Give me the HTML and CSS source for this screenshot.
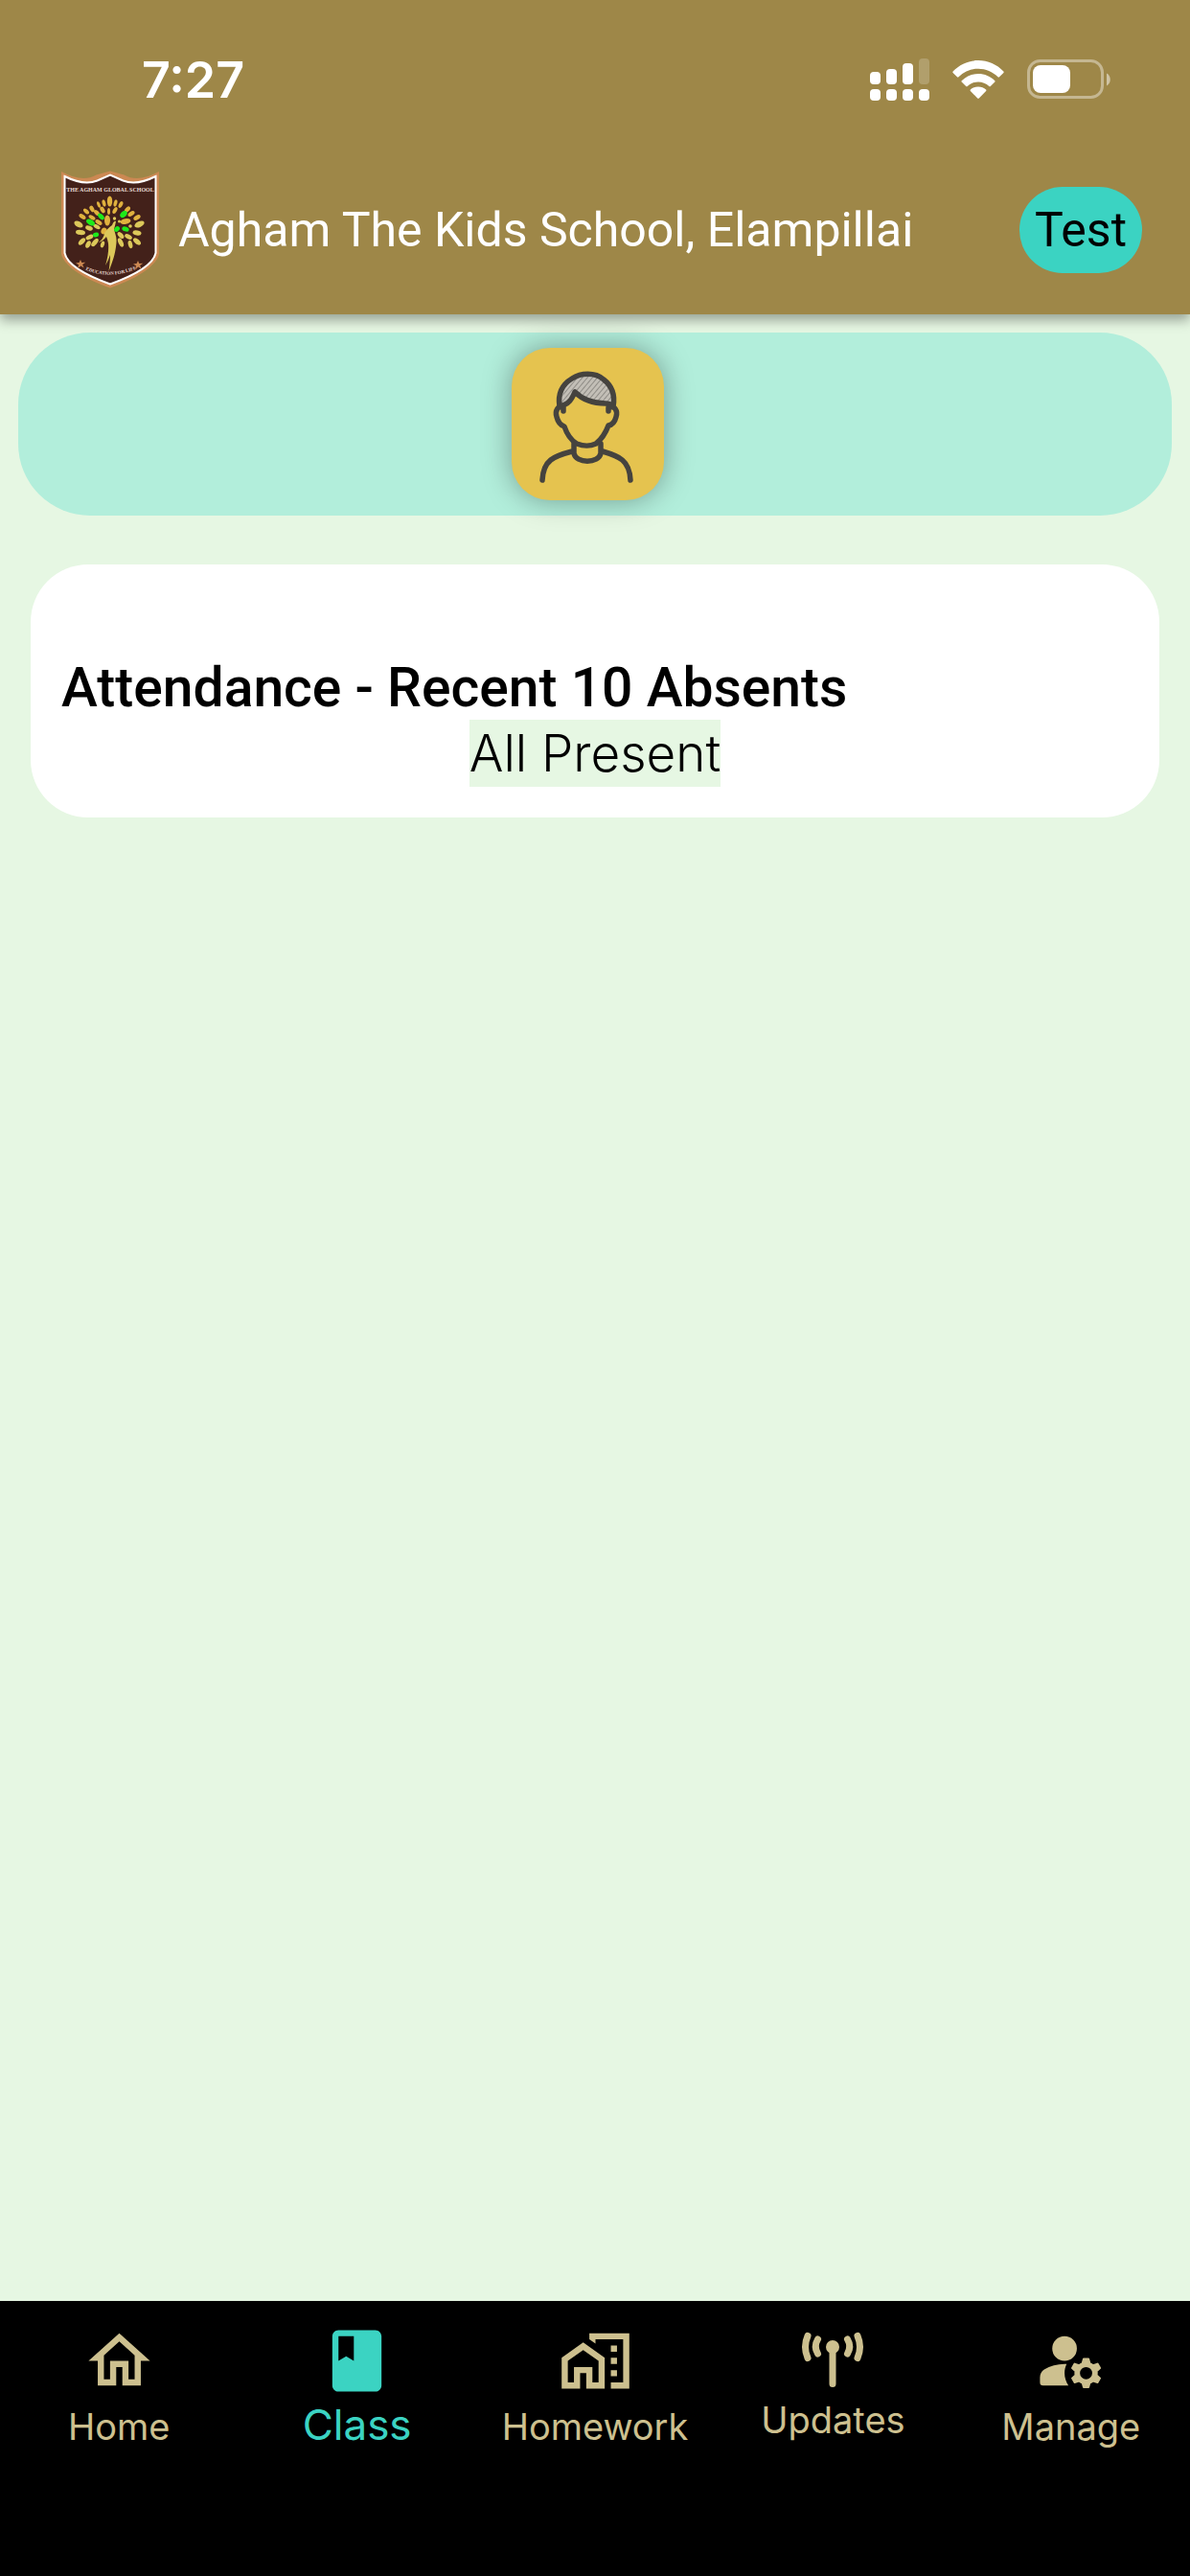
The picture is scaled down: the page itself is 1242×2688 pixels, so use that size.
FILE: index.html
```html
<!DOCTYPE html>
<html lang="en">
<head>
  <meta charset="UTF-8">
  <meta name="viewport" content="width=device-width, initial-scale=1.0">
  <title>Agham The Kids School, Elampillai</title>
  <link rel="stylesheet" href="styles.css">
</head>
<body>
  <header class="header">
    <div class="status">
      <span class="time">7:27</span>
      <svg class="signal" viewBox="0 0 62 44" fill="#fff">
        <rect x="0" y="14" width="11" height="13" rx="4"/>
        <rect x="17" y="11" width="11" height="16" rx="4"/>
        <rect x="34" y="5" width="11" height="22" rx="4"/>
        <rect x="51" y="0" width="11" height="27" rx="4" opacity=".2"/>
        <rect x="0" y="32" width="11" height="12" rx="4"/>
        <rect x="17" y="32" width="11" height="12" rx="4"/>
        <rect x="34" y="32" width="11" height="12" rx="4"/>
        <rect x="51" y="32" width="11" height="12" rx="4"/>
      </svg>
      <svg class="wifi" viewBox="0 0 54 40" fill="#fff">
        <path d="M0.600 11.500C7.500 4.200 17 0 27 0s19.500 4.200 26.400 11.500q.6.800 0 1.500L49 17.300q-.8.700-1.500 0C42 11.700 34.800 8.700 27 8.700S12 11.700 6.500 17.300q-.7.700-1.500 0L.6 13q-.6-.7 0-1.500z"/>
        <path d="M9.700 21.200C14.200 16.700 20.300 14 27 14s12.800 2.700 17.300 7.200q.6.700 0 1.400l-4.500 4.400q-.7.700-1.500 0C35.200 24 31.200 22.400 27 22.400S18.800 24 15.700 27q-.8.700-1.500 0l-4.500-4.400q-.6-.7 0-1.400z"/>
        <path d="M18.900 30.500C21 28.700 23.900 27.500 27 27.500s6 1.200 8.100 3q.7.700 0 1.400l-7.300 7.500q-.8.800-1.600 0l-7.300-7.500q-.7-.7 0-1.400z"/>
      </svg>
      <svg class="battery" viewBox="0 0 88 42">
        <rect x="1.500" y="1.500" width="77" height="38" rx="12" fill="none" stroke="#fff" stroke-opacity=".4" stroke-width="3"/>
        <path d="M83 14.500c5 2.300 5 10.700 0 13z" fill="#fff" opacity=".5"/>
        <rect x="6" y="6" width="39" height="29" rx="8" fill="#fff"/>
      </svg>
    </div>

    <div class="bar">
      <svg class="logo" viewBox="0 0 130 140">
        <path d="M14 9q22 12 36.500 3.500L65 8.500l14.500 4Q94 21 116 9v86c-2 10-18 24-51 35.500C32 119 16 105 14 95z" fill="#cb8852"/>
        <path d="M17.500 14q20 10 34 4.500L65 12.500l13.500 6q14 5.500 34-4.500v80c-2 10-16 21-47.500 32.500C33.500 115 19.500 104 17.500 94z" fill="#43211a" stroke="#fff" stroke-width="2"/>
        <text x="65" y="29.500" class="logo-name">THE AGHAM GLOBAL SCHOOL</text>
        <path id="motto" d="M36 110Q64 124 96 109" fill="none"/>
        <text class="logo-motto"><textPath href="#motto" startOffset="50%">EDUCATION FOR LIFE</textPath></text>
        <g fill="#e0b23e" id="leaves">
          <ellipse cx="64.500" cy="40" rx="2.700" ry="5.500"/>
          <ellipse cx="58.500" cy="42" rx="1.800" ry="3.700" transform="rotate(-15 58.500 42)"/>
          <ellipse cx="70.500" cy="42" rx="1.800" ry="3.700" transform="rotate(15 70.500 42)"/>
          <ellipse cx="53" cy="43.500" rx="1.600" ry="3.500" transform="rotate(-20 53 43.500)"/>
          <ellipse cx="76" cy="43.500" rx="2" ry="3.700" transform="rotate(25 76 43.500)"/>
          <ellipse cx="46" cy="48" rx="2.200" ry="3.600" transform="rotate(-30 46 48)"/>
          <ellipse cx="83" cy="48.500" rx="2.200" ry="3.600" transform="rotate(45 83 48.500)"/>
          <ellipse cx="57" cy="49" rx="2.200" ry="3.600" transform="rotate(-30 57 49)"/>
          <ellipse cx="63.500" cy="50.500" rx="1.500" ry="3.500"/>
          <ellipse cx="70" cy="49.500" rx="2" ry="3.800" transform="rotate(30 70 49.500)"/>
          <ellipse cx="40" cy="50.500" rx="2" ry="3.700" transform="rotate(-45 40 50.500)"/>
          <ellipse cx="51" cy="52" rx="2.200" ry="3.500" transform="rotate(-45 51 52)"/>
          <ellipse cx="87" cy="53" rx="2.200" ry="4" transform="rotate(55 87 53)"/>
          <ellipse cx="36" cy="56" rx="2.200" ry="4" transform="rotate(-55 36 56)"/>
          <ellipse cx="46" cy="57" rx="2" ry="3.800" transform="rotate(-60 46 57)"/>
          <ellipse cx="62" cy="60" rx="3" ry="5.500"/>
          <ellipse cx="81" cy="61" rx="2.800" ry="5.500" transform="rotate(80 81 61)"/>
          <ellipse cx="93" cy="57" rx="2.200" ry="4" transform="rotate(60 93 57)"/>
          <ellipse cx="58.500" cy="71" rx="3" ry="3.500" transform="rotate(20 58.500 71)"/>
          <ellipse cx="53" cy="62" rx="2.200" ry="4" transform="rotate(-55 53 62)"/>
        </g>
        <g fill="#dcc85a">
          <ellipse cx="32" cy="64" rx="3" ry="5" transform="rotate(-60 32 64)"/>
          <ellipse cx="34" cy="72.500" rx="2.600" ry="5" transform="rotate(-85 34 72.500)"/>
          <ellipse cx="35.500" cy="82" rx="2.500" ry="4.500" transform="rotate(45 35.500 82)"/>
          <ellipse cx="43.500" cy="77.500" rx="2.300" ry="4.200" transform="rotate(65 43.500 77.500)"/>
          <ellipse cx="43" cy="68" rx="2.300" ry="4" transform="rotate(-70 43 68)"/>
          <ellipse cx="51" cy="66.500" rx="2" ry="4" transform="rotate(-60 51 66.500)"/>
          <ellipse cx="42" cy="85" rx="2.400" ry="4" transform="rotate(25 42 85)"/>
          <ellipse cx="49" cy="83" rx="2.400" ry="5" transform="rotate(40 49 83)"/>
          <ellipse cx="57" cy="85" rx="1.900" ry="3.500" transform="rotate(20 57 85)"/>
          <ellipse cx="95.500" cy="64" rx="3" ry="5.500" transform="rotate(65 95.500 64)"/>
          <ellipse cx="93" cy="73" rx="2.600" ry="4.600" transform="rotate(-80 93 73)"/>
          <ellipse cx="93" cy="82" rx="2.500" ry="4.700" transform="rotate(-50 93 82)"/>
          <ellipse cx="84" cy="77" rx="2.300" ry="4.200" transform="rotate(-60 84 77)"/>
          <ellipse cx="86" cy="85" rx="2.200" ry="4.200" transform="rotate(-15 86 85)"/>
          <ellipse cx="76" cy="75.500" rx="2.300" ry="4.200" transform="rotate(-45 76 75.500)"/>
          <ellipse cx="76" cy="83" rx="2.400" ry="5" transform="rotate(-25 76 83)"/>
          <circle cx="86" cy="66" r="1.800"/>
          <circle cx="69.500" cy="58" r="1.700"/>
          <circle cx="74.500" cy="61" r="1.500"/>
          <path d="M67 65q2-5 4-4-1 5-2 8c1 5 3 8 2.500 14-1 12-4 20-8 30 1-7 1.500-13 1.500-17q-2 6-5 11 4-13 3-23-1-5-2-7-4 5-8 6 5-4 6-9 2-5 8-9z"/>
        </g>
        <g fill="#1dea1a">
          <ellipse cx="55.500" cy="56" rx="2.300" ry="4" transform="rotate(-45 55.500 56)"/>
          <ellipse cx="79" cy="53.500" rx="3" ry="4.200" transform="rotate(45 79 53.500)"/>
          <ellipse cx="44.500" cy="62" rx="2.800" ry="4.800" transform="rotate(-60 44.500 62)"/>
          <ellipse cx="50" cy="75" rx="2.300" ry="3.200" transform="rotate(70 50 75)"/>
          <ellipse cx="72" cy="69" rx="2.500" ry="3.300" transform="rotate(45 72 69)"/>
          <ellipse cx="81" cy="69" rx="2.500" ry="3.800" transform="rotate(-70 81 69)"/>
        </g>
        <g fill="#cb8852">
          <path id="star" d="M34 101l1.300 3 4-.3-3.200 2.200 1.500 3.600-3.300-2-3 2.500.7-3.700-3-1.800 3.600-.4z"/>
          <use href="#star" x="60" y="1"/>
        </g>
      </svg>
      <h1 class="school">Agham The Kids School, Elampillai</h1>
      <button class="test-btn" type="button">Test</button>
    </div>
  </header>

  <main class="content">
    <section class="students">
      <button class="avatar" type="button" aria-label="Student">
        <svg viewBox="0 0 159 159" fill="none" stroke="#45433f" stroke-width="5.500" stroke-linecap="round" stroke-linejoin="round">
          <defs>
            <pattern id="hatch" width="4" height="4" patternUnits="userSpaceOnUse" patternTransform="rotate(40)" stroke="none">
              <rect width="4" height="4" fill="#c3bfb7"/>
              <rect width="1" height="4" fill="#8f8c86"/>
            </pattern>
          </defs>
          <path d="M50 61C48 48 53 38 63 32c9-6 24-7 33 1 9 7 12 17 10 28q-3-3-8-3c-14 0-24-4-32-12-3 7-6 13-16 15z" fill="url(#hatch)"/>
          <path d="M54 66v-4c-6-2-9 4-7 10q2 8 8 10c3 9 8 15 13 18 8 3 13 3 20 0 5-4 10-11 13-19q6-1 8-9c2-6-1-12-8-10v4"/>
          <path d="M65 100v10c2 11 26 11 28 0v-10M63 108c-19 5-30 9-31 30M95 108c17 5 28 9 29 30"/>
        </svg>
      </button>
    </section>

    <section class="card">
      <h2>Attendance - Recent 10 Absents</h2>
      <p><span class="result">All Present</span></p>
    </section>
  </main>

  <nav class="nav">
    <a href="#">
      <svg class="icon" viewBox="0 0 24 24"><path d="M12 5.690l5 4.500V18h-2v-6H9v6H7v-7.810l5-4.500M12 3L2 12h3v8h6v-6h2v6h6v-8h3L12 3z"/></svg>
      <span>Home</span>
    </a>
    <a href="#" class="active">
      <svg class="icon" viewBox="0 0 24 24"><path d="M18 2H6c-1.100 0-2 .9-2 2v16c0 1.100.9 2 2 2h12c1.100 0 2-.9 2-2V4c0-1.100-.9-2-2-2zM6 4h5v8l-2.500-1.500L6 12V4z"/></svg>
      <span>Class</span>
    </a>
    <a href="#">
      <svg class="icon" viewBox="0 0 24 24"><path d="M1 11v10h6v-5h2v5h6V11L8 6l-7 5zm12 8h-2v-5H5v5H3v-7l5-3.500 5 3.500v7zM17 7h2v2h-2zM17 11h2v2h-2zM17 15h2v2h-2zM10 3v1.970l2 1.430V5h9v14h-4v2h6V3H10z"/></svg>
      <span>Homework</span>
    </a>
    <a href="#">
      <svg class="icon icon-small" viewBox="0 0 72 70">
        <path d="M36 23v39.500M20.500 16q-4.500 7.500 0 15M51.500 16q4.500 7.500 0 15M10 12.500q-5 11.500 0 23M62 12.500q5 11.500 0 23" fill="none" stroke="currentColor" stroke-width="7" stroke-linecap="round"/>
        <circle cx="36" cy="24" r="7"/>
      </svg>
      <span>Updates</span>
    </a>
    <a href="#">
      <svg class="icon" viewBox="0 0 24 24">
        <circle cx="10" cy="8" r="4"/>
        <path d="M10.670 13.020C10.450 13.010 10.230 13 10 13c-2.420 0-4.680.67-6.610 1.820C2.510 15.340 2 16.320 2 17.350V19q0 1 1 1h8.260C10.470 18.870 10 17.490 10 16c0-1.070.25-2.070.67-2.980z"/>
        <path stroke="currentColor" stroke-width=".6" stroke-linejoin="round" d="M20.500 16c0-.22-.03-.42-.06-.63l1.100-1.010-.8-1.400-1.450.49c-.32-.27-.68-.48-1.080-.63L17.800 11.400h-1.600l-.4 1.420c-.4.15-.76.36-1.080.63l-1.450-.49-.8 1.400 1.100 1.010c-.03.21-.06.41-.06.63s.03.42.06.63l-1.100 1.010.8 1.400 1.450-.49c.32.27.68.48 1.080.63l.4 1.420h1.600l.4-1.420c.4-.15.76-.36 1.080-.63l1.450.49.8-1.400-1.100-1.010c.03-.21.06-.41.06-.63zM17 18.300c-1.270 0-2.300-1.030-2.300-2.300s1.030-2.300 2.300-2.300 2.300 1.030 2.300 2.300-1.030 2.300-2.300 2.300z"/>
      </svg>
      <span>Manage</span>
    </a>
  </nav>
</body>
</html>
```
FILE: styles.css
```css
* {
  box-sizing: border-box;
}

body {
  margin: 0;
  min-height: 100vh;
  display: flex;
  flex-direction: column;
  font-family: Roboto, sans-serif;
  background-color: #e6f7e3;
  color: #000;
}

.header {
  background-color: #9e8748;
  color: #fff;
  box-shadow: 0 6px 12px rgba(0, 0, 0, 0.35);
}

/* phone status bar */
.status {
  display: flex;
  align-items: center;
  padding: 50px 82px 0 148px;
  height: 116px;
}

.time {
  flex: 1;
  font-family: Inter, sans-serif;
  font-size: 52px;
  font-weight: 600;
}

.signal {
  width: 62px;
  height: 44px;
}

.wifi {
  width: 54px;
  height: 40px;
  margin: 0 24px;
}

.battery {
  width: 88px;
  height: 42px;
}

.bar {
  display: flex;
  align-items: center;
  padding: 54px 50px 18px;
}

.logo {
  width: 130px;
  height: 140px;
}

.logo-name,
.logo-motto {
  font-family: "Liberation Serif", serif;
  font-weight: 700;
  font-size: 6px;
  fill: #e8dcd5;
  text-anchor: middle;
}

.logo-motto {
  font-size: 5px;
}

.school {
  flex: 1;
  margin: 0 0 0 6px;
  font-size: 50px;
  font-weight: 400;
}

.test-btn {
  height: 90px;
  padding: 0 16px;
  border: none;
  border-radius: 45px;
  background-color: #3bd3c2;
  color: #000;
  font-family: inherit;
  font-size: 50px;
}

.content {
  flex: 1;
  padding: 19px;
}

.students {
  display: flex;
  justify-content: center;
  padding: 16px 16px 16px 0;
  border-radius: 75px;
  background-color: #b2eedb;
}

.avatar {
  width: 159px;
  height: 159px;
  padding: 0;
  border: none;
  border-radius: 40px;
  background-color: #e5c34f;
  box-shadow: 0 0 30px rgba(0, 0, 0, 0.35);
}

.avatar svg {
  display: block;
}

.card {
  margin: 51px 13px 0;
  padding: 96px 32px 32px;
  border-radius: 60px;
  background-color: #fff;
}

.card h2 {
  margin: 0;
  font-size: 57px;
  line-height: 66px;
  font-weight: 500;
}

.card p {
  margin: 0;
  text-align: center;
}

.result {
  display: inline-block;
  background-color: #e6f7e3;
  font-family: Inter, sans-serif;
  font-size: 53px;
  font-weight: 300;
  line-height: 70px;
}

.nav {
  display: flex;
  height: 287px;
  padding-top: 24px;
  background-color: #000;
}

.nav a {
  flex: 1;
  display: flex;
  flex-direction: column;
  align-items: center;
  color: #cdc08f;
  font-family: Inter, sans-serif;
  font-size: 38px;
  line-height: 52px;
  text-decoration: none;
}

.nav .active {
  color: #3bd3c2;
  font-size: 44px;
  line-height: 48px;
}

.icon {
  width: 77px;
  height: 77px;
  margin-bottom: 4px;
  fill: currentColor;
}

.icon-small {
  width: 72px;
  height: 70px;
}
```
